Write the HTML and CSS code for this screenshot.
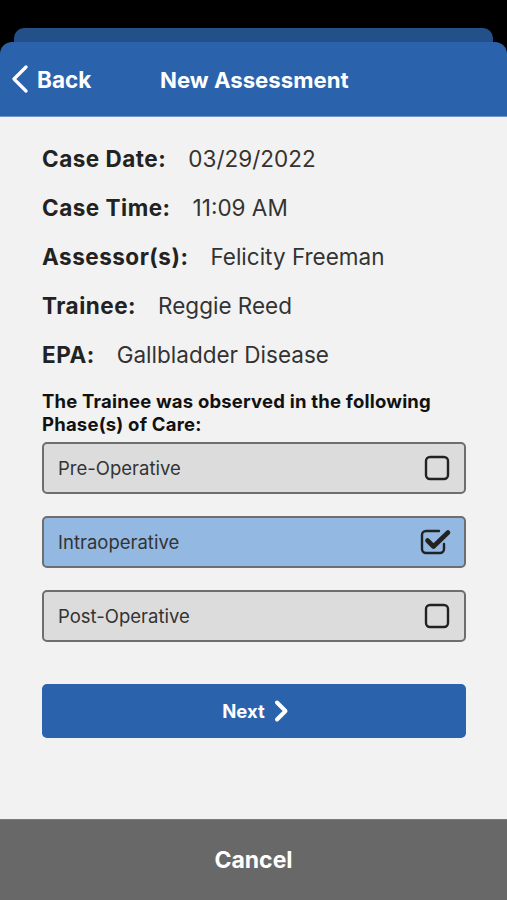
FILE: index.html
```html
<!DOCTYPE html>
<html>
<head>
<meta charset="utf-8">
<link rel="stylesheet" href="styles.css">
</head>
<body>
<div class="screen">
  <div class="back-card"></div>
  <header class="header">
    <div class="back">
      <svg class="back-chev" width="18" height="28" viewBox="0 0 18 28"><path d="M15 2 L3 14 L15 26" fill="none" stroke="#fff" stroke-width="3.2" stroke-linecap="round" stroke-linejoin="round"/></svg>
      <span>Back</span>
    </div>
    <div class="title">New Assessment</div>
  </header>
  <main class="content">
    <div class="row"><span class="label">Case Date:</span><span class="value">03/29/2022</span></div>
    <div class="row"><span class="label">Case Time:</span><span class="value">11:09 AM</span></div>
    <div class="row"><span class="label">Assessor(s):</span><span class="value">Felicity Freeman</span></div>
    <div class="row"><span class="label">Trainee:</span><span class="value">Reggie Reed</span></div>
    <div class="row"><span class="label">EPA:</span><span class="value">Gallbladder Disease</span></div>
    <p class="question">The Trainee was observed in the following Phase(s) of Care:</p>
    <div class="options">
      <div class="option">
        <span>Pre-Operative</span>
        <svg class="box" width="28" height="28" viewBox="0 0 28 28"><rect x="3" y="3" width="22" height="22" rx="4" fill="none" stroke="#222" stroke-width="2.4"/></svg>
      </div>
      <div class="option selected">
        <span>Intraoperative</span>
        <svg class="box" width="36" height="28" viewBox="0 0 36 28"><path d="M20 3 H7 a4 4 0 0 0 -4 4 V21 a4 4 0 0 0 4 4 H21 a4 4 0 0 0 4 -4 V16" fill="none" stroke="#222" stroke-width="2.4" stroke-linecap="round"/><path d="M8.5 12.5 L14.5 18.5 L29 4.5" fill="none" stroke="#222" stroke-width="4.6" stroke-linecap="round" stroke-linejoin="round"/></svg>
      </div>
      <div class="option">
        <span>Post-Operative</span>
        <svg class="box" width="28" height="28" viewBox="0 0 28 28"><rect x="3" y="3" width="22" height="22" rx="4" fill="none" stroke="#222" stroke-width="2.4"/></svg>
      </div>
    </div>
    <button class="next">Next <svg width="18" height="24" viewBox="0 0 18 24"><path d="M5 3.5 L13.5 12 L5 20.5" fill="none" stroke="#fff" stroke-width="4" stroke-linecap="round" stroke-linejoin="round"/></svg></button>
  </main>
  <footer class="cancel">Cancel</footer>
</div>
</body>
</html>
```
FILE: styles.css
```css
* { box-sizing: border-box; }
html, body { margin: 0; padding: 0; }
body {
  background: #000;
  font-family: Inter, "Liberation Sans", Arial, sans-serif;
  width: 507px;
  height: 900px;
  overflow: hidden;
}
.screen {
  padding-top: 28px;
  display: flex;
  flex-direction: column;
  height: 900px;
}
.back-card {
  height: 14px;
  margin: 0 14px;
  background: #24508a;
  border-radius: 10px 10px 0 0;
  flex: none;
}
.header {
  flex: none;
  height: 75px;
  background: #2b62ac;
  border-radius: 12px 12px 0 0;
  border-bottom: 1px solid #6b93c8;
  display: flex;
  align-items: center;
  color: #fff;
  font-weight: 700;
}
.back {
  display: flex;
  align-items: center;
  padding-left: 11px;
  font-size: 22.5px;
  width: 160px;
}
.back-chev { margin-right: 8px; }
.title {
  font-size: 22.2px;
}
.content {
  flex: 1;
  background: #f2f2f2;
  padding: 17px 41px 0 42px;
}
.row {
  height: 49px;
  display: flex;
  align-items: center;
  font-size: 22.5px;
}
.label {
  font-weight: 700;
  color: #222;
  letter-spacing: 0.5px;
  margin-right: 22px;
}
.value {
  color: #333;
}
.question {
  margin: 11px 0 6px;
  font-size: 18.5px;
  letter-spacing: 0.2px;
  line-height: 23px;
  font-weight: 700;
  color: #111;
}
.options {
  display: flex;
  flex-direction: column;
  gap: 22px;
}
.option {
  height: 52px;
  border: 2px solid #6e6e6e;
  border-radius: 5px;
  background: #dcdcdc;
  display: flex;
  align-items: center;
  justify-content: space-between;
  padding: 0 13px 0 14px;
  font-size: 18.5px;
  color: #333;
}
.option.selected {
  background: #93b9e2;
  padding-right: 9px;
}
.next {
  margin-top: 42px;
  width: 100%;
  height: 54px;
  border: none;
  border-radius: 5px;
  background: #2b62ac;
  color: #fff;
  font-family: inherit;
  font-weight: 700;
  font-size: 18.5px;
  display: flex;
  align-items: center;
  justify-content: center;
  gap: 7px;
  padding: 0 0 0 4px;
}
.cancel {
  flex: none;
  height: 81px;
  background: #686868;
  border-top: 1px solid #7a7a7a;
  color: #fff;
  font-weight: 700;
  font-size: 23px;
  display: flex;
  align-items: center;
  justify-content: center;
}
```
